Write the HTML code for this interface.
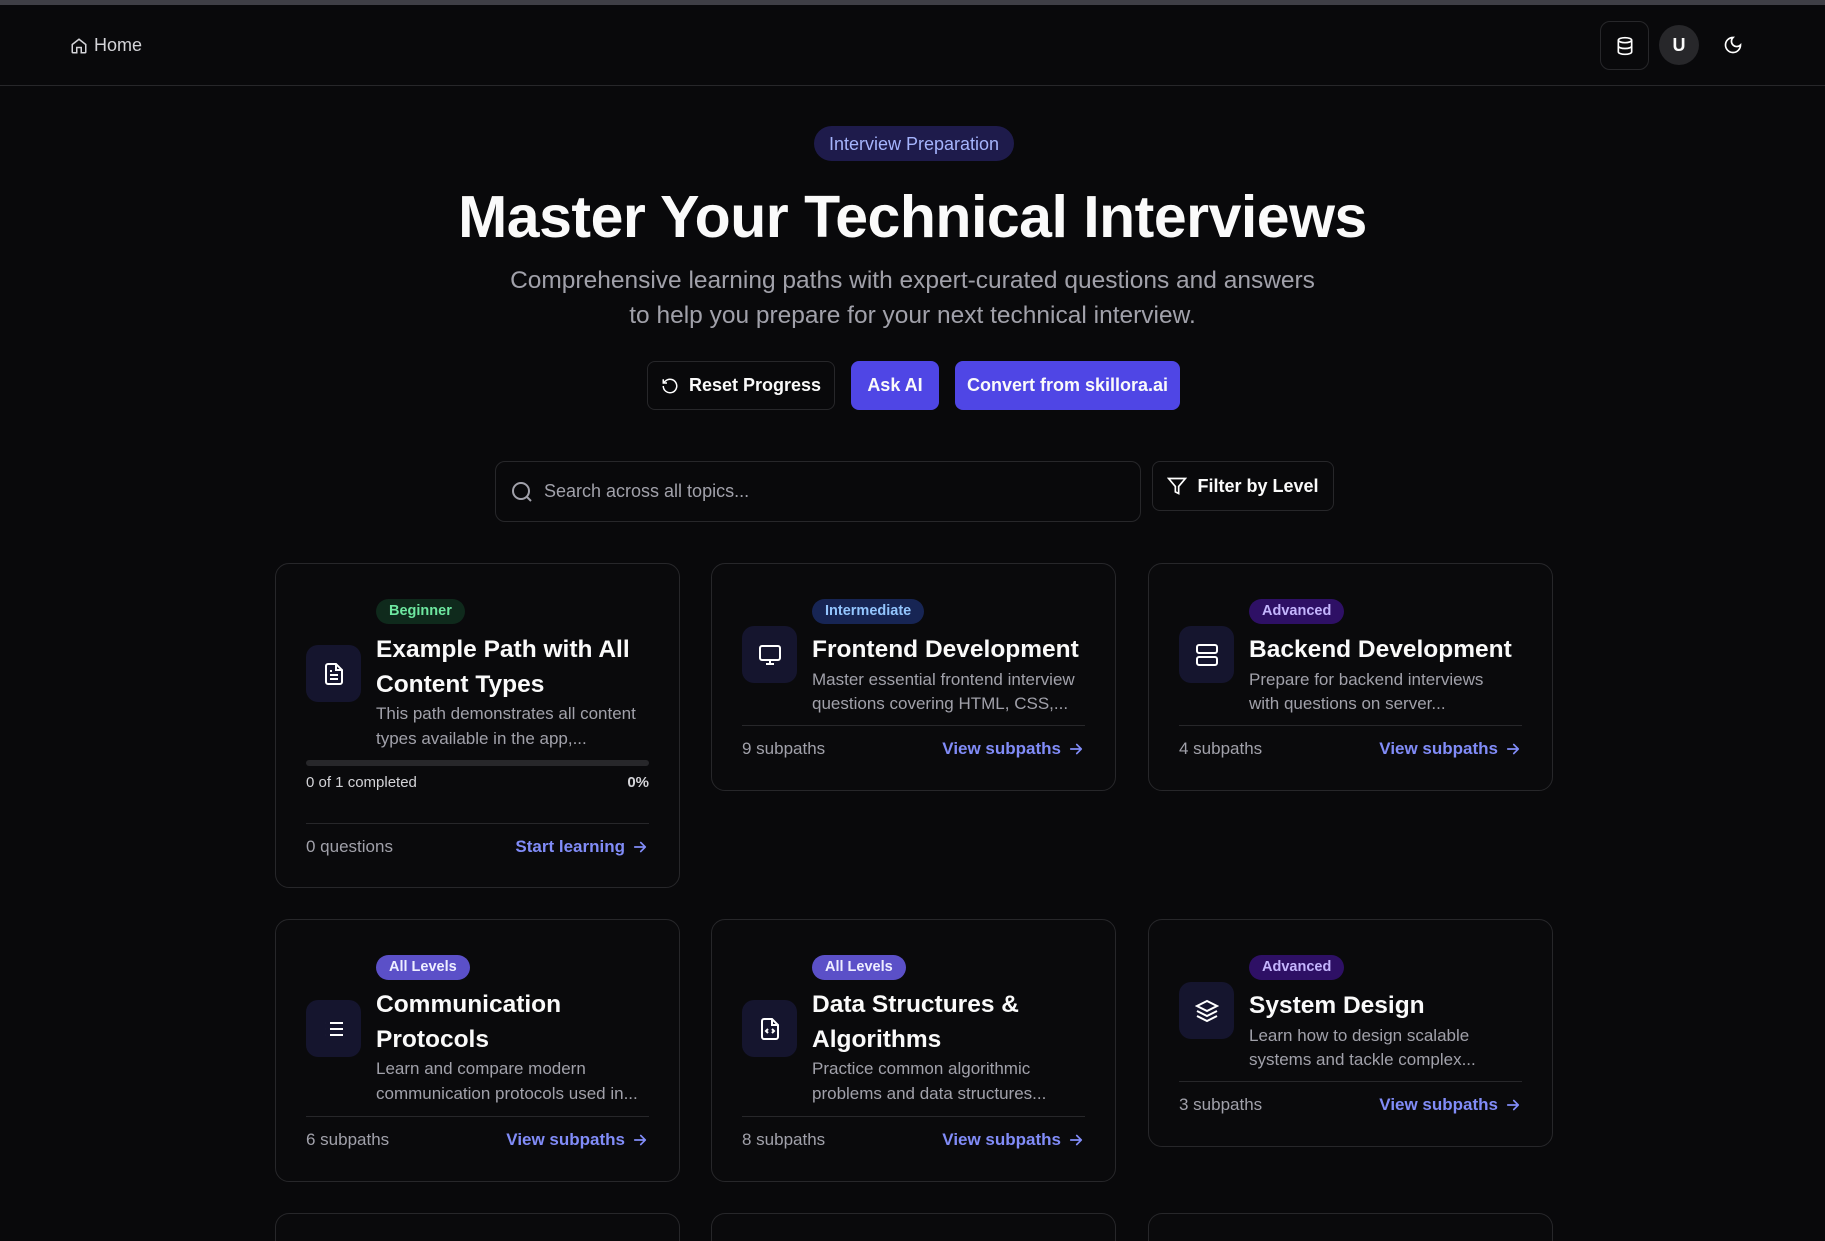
<!DOCTYPE html>
<html style="width:1825px;height:1241px;overflow:hidden"><head><meta charset="utf-8"><style>
*{box-sizing:border-box;margin:0;padding:0}
body{width:1825px;height:1241px;background:#09090b;font-family:"Liberation Sans",sans-serif;color:#fafafa;overflow:hidden;position:relative}
.abs{position:absolute}
.top{left:0;top:0;width:1825px;height:5px;background:#3f3f46}
.hdr{left:0;top:85px;width:1825px;height:1px;background:#27272a}
.card{position:absolute;width:405px;border:1px solid #27272a;border-radius:14px;background:#0a0a0c}
.card>*{position:absolute}
.ic{left:30px;width:55px;height:57px;border-radius:12px;background:#15152e;display:flex;align-items:center;justify-content:center}
.bd{left:100px;height:25px;line-height:25px;padding:0 13px;border-radius:13px;font-size:14.5px;font-weight:bold}
.tt{left:100px;font-size:24.5px;font-weight:bold;line-height:35px;white-space:nowrap;color:#fafafa}
.ds{left:100px;font-size:17px;line-height:25px;color:#a1a1aa;white-space:nowrap}
.dv{left:30px;right:30px;height:1px;background:#27272a}
.ft{left:30px;right:30px;font-size:17px;line-height:25px;color:#a1a1aa;display:flex;justify-content:space-between}
.ft b{color:#818cf8;font-weight:bold;display:flex;align-items:center;gap:6px}
.beg{background:#0f2a1c;color:#6ee7a0}.int{background:#172554;color:#93c5fd}.adv{background:#2e1065;color:#c4b5fd}.all{background:#5b50c8;color:#eef}
.btn{position:absolute;top:361px;height:49px;border-radius:8px;font-size:18px;font-weight:bold;display:flex;align-items:center;justify-content:center;gap:10px}
</style></head><body>
<svg width="0" height="0" style="position:absolute"><defs><symbol id="ar" viewBox="0 0 24 24"><path d="M5 12h14M13 6l6 6-6 6" fill="none" stroke="#818cf8" stroke-width="2.2" stroke-linecap="round" stroke-linejoin="round"/></symbol></defs></svg>
<div class="abs top"></div><div class="abs hdr"></div>
<div class="abs" style="left:70px;top:35px;font-size:18px;color:#d4d4d8;display:flex;align-items:center;gap:6px">
<svg width="18" height="18" viewBox="0 0 24 24" fill="none" stroke="#d4d4d8" stroke-width="2"><path d="M3 10l9-7 9 7v10a1 1 0 0 1-1 1h-5v-7h-6v7H4a1 1 0 0 1-1-1z"/></svg>Home</div>
<div class="abs" style="left:1600px;top:21px;width:49px;height:49px;border:1px solid #27272a;border-radius:10px;display:flex;align-items:center;justify-content:center">
<svg width="20" height="20" viewBox="0 0 24 24" fill="none" stroke="#fff" stroke-width="2"><ellipse cx="12" cy="5" rx="8" ry="3"/><path d="M4 5v14c0 1.7 3.6 3 8 3s8-1.3 8-3V5M4 12c0 1.7 3.6 3 8 3s8-1.3 8-3"/></svg></div>
<div class="abs" style="left:1659px;top:25px;width:40px;height:40px;border-radius:50%;background:#27272a;display:flex;align-items:center;justify-content:center;font-weight:bold;font-size:18px">U</div>
<svg class="abs" style="left:1723px;top:35px" width="20" height="20" viewBox="0 0 24 24" fill="none" stroke="#fff" stroke-width="2"><path d="M12 3a6 6 0 0 0 9 9 9 9 0 1 1-9-9z"/></svg>

<div class="abs" style="left:814px;top:126px;width:200px;height:35px;border-radius:18px;background:#1e1b4b;color:#a5b4fc;font-size:18px;line-height:37px;text-align:center">Interview Preparation</div>
<div class="abs" style="left:0;width:1825px;top:180px;text-align:center;font-size:59px;font-weight:bold;line-height:74px;letter-spacing:-0.5px">Master Your Technical Interviews</div>
<div class="abs" style="left:0;width:1825px;top:263px;text-align:center;font-size:24.5px;line-height:35px;color:#a1a1aa">Comprehensive learning paths with expert-curated questions and answers<br>to help you prepare for your next technical interview.</div>

<div class="btn" style="left:647px;width:188px;border:1px solid #27272a"><svg width="18" height="18" viewBox="0 0 24 24" fill="none" stroke="#fff" stroke-width="2"><path d="M3 12a9 9 0 1 0 3-6.7L3 8M3 3v5h5"/></svg>Reset Progress</div>
<div class="btn" style="left:851px;width:88px;background:#4f46e5">Ask AI</div>
<div class="btn" style="left:955px;width:225px;background:#4f46e5">Convert from skillora.ai</div>

<div class="abs" style="left:495px;top:461px;width:646px;height:61px;border:1px solid #27272a;border-radius:10px;display:flex;align-items:center;padding-left:14px;gap:10px;color:#a1a1aa;font-size:18px">
<svg width="24" height="24" viewBox="0 0 24 24" fill="none" stroke="#a1a1aa" stroke-width="2"><circle cx="11" cy="11" r="8"/><path d="M21 21l-4.3-4.3"/></svg>Search across all topics...</div>
<div class="abs" style="left:1152px;top:461px;width:182px;height:50px;border:1px solid #27272a;border-radius:8px;display:flex;align-items:center;justify-content:center;gap:10px;font-size:18px;font-weight:bold">
<svg width="20" height="20" viewBox="0 0 24 24" fill="none" stroke="#fff" stroke-width="2"><path d="M22 3H2l8 9.5V19l4 2v-8.5z"/></svg>Filter by Level</div>

<div class="card" style="left:275px;top:563px;height:325px">
<div class="ic" style="top:81px"><svg width="24" height="24" viewBox="0 0 24 24" fill="none" stroke="#fff" stroke-width="2"><path d="M14 2H6a2 2 0 0 0-2 2v16a2 2 0 0 0 2 2h12a2 2 0 0 0 2-2V8z"/><path d="M14 2v6h6M16 13H8M16 17H8M10 9H8"/></svg></div>
<div class="bd beg" style="top:35px">Beginner</div>
<div class="tt" style="top:68px">Example Path with All</div>
<div class="tt" style="top:103px">Content Types</div>
<div class="ds" style="top:137px">This path demonstrates all content</div>
<div class="ds" style="top:162px">types available in the app,...</div>
<div style="left:30px;right:30px;top:196px;height:6px;border-radius:3px;background:#27272a"></div>
<div style="left:30px;right:30px;top:208px;font-size:15px;color:#d4d4d8;display:flex;justify-content:space-between;line-height:22px"><span>0 of 1 completed</span><b>0%</b></div>
<div class="dv" style="top:259px"></div>
<div class="ft" style="top:270px"><span>0 questions</span><b>Start learning <svg width="18" height="18"><use href="#ar"/></svg></b></div>
</div>

<div class="card" style="left:711px;top:563px;height:228px">
<div class="ic" style="top:62px"><svg width="24" height="24" viewBox="0 0 24 24" fill="none" stroke="#fff" stroke-width="2"><rect x="2" y="3" width="20" height="14" rx="2"/><path d="M8 21h8M12 17v4"/></svg></div>
<div class="bd int" style="top:35px">Intermediate</div>
<div class="tt" style="top:68px">Frontend Development</div>
<div class="ds" style="top:103px">Master essential frontend interview</div>
<div class="ds" style="top:127px">questions covering HTML, CSS,...</div>
<div class="dv" style="top:161px"></div>
<div class="ft" style="top:172px"><span>9 subpaths</span><b>View subpaths <svg width="18" height="18"><use href="#ar"/></svg></b></div>
</div>

<div class="card" style="left:1148px;top:563px;height:228px">
<div class="ic" style="top:62px"><svg width="24" height="24" viewBox="0 0 24 24" fill="none" stroke="#fff" stroke-width="2"><rect x="2" y="2" width="20" height="8" rx="2"/><rect x="2" y="14" width="20" height="8" rx="2"/><path d="M6 6h.01M6 18h.01"/></svg></div>
<div class="bd adv" style="top:35px">Advanced</div>
<div class="tt" style="top:68px">Backend Development</div>
<div class="ds" style="top:103px">Prepare for backend interviews</div>
<div class="ds" style="top:127px">with questions on server...</div>
<div class="dv" style="top:161px"></div>
<div class="ft" style="top:172px"><span>4 subpaths</span><b>View subpaths <svg width="18" height="18"><use href="#ar"/></svg></b></div>
</div>

<div class="card" style="left:275px;top:919px;height:263px">
<div class="ic" style="top:80px"><svg width="24" height="24" viewBox="0 0 24 24" fill="none" stroke="#fff" stroke-width="2"><path d="M8 6h13M8 12h13M8 18h13M3 6h.01M3 12h.01M3 18h.01"/></svg></div>
<div class="bd all" style="top:35px">All Levels</div>
<div class="tt" style="top:67px">Communication</div>
<div class="tt" style="top:102px">Protocols</div>
<div class="ds" style="top:136px">Learn and compare modern</div>
<div class="ds" style="top:161px">communication protocols used in...</div>
<div class="dv" style="top:196px"></div>
<div class="ft" style="top:207px"><span>6 subpaths</span><b>View subpaths <svg width="18" height="18"><use href="#ar"/></svg></b></div>
</div>

<div class="card" style="left:711px;top:919px;height:263px">
<div class="ic" style="top:80px"><svg width="24" height="24" viewBox="0 0 24 24" fill="none" stroke="#fff" stroke-width="2"><path d="M14 2H6a2 2 0 0 0-2 2v16a2 2 0 0 0 2 2h12a2 2 0 0 0 2-2V8z"/><path d="M14 2v6h6M10 12l-2 2 2 2M14 12l2 2-2 2"/></svg></div>
<div class="bd all" style="top:35px">All Levels</div>
<div class="tt" style="top:67px">Data Structures &amp;</div>
<div class="tt" style="top:102px">Algorithms</div>
<div class="ds" style="top:136px">Practice common algorithmic</div>
<div class="ds" style="top:161px">problems and data structures...</div>
<div class="dv" style="top:196px"></div>
<div class="ft" style="top:207px"><span>8 subpaths</span><b>View subpaths <svg width="18" height="18"><use href="#ar"/></svg></b></div>
</div>

<div class="card" style="left:1148px;top:919px;height:228px">
<div class="ic" style="top:62px"><svg width="24" height="24" viewBox="0 0 24 24" fill="none" stroke="#fff" stroke-width="2"><path d="M12 2L2 7l10 5 10-5z"/><path d="M2 17l10 5 10-5M2 12l10 5 10-5"/></svg></div>
<div class="bd adv" style="top:35px">Advanced</div>
<div class="tt" style="top:68px">System Design</div>
<div class="ds" style="top:103px">Learn how to design scalable</div>
<div class="ds" style="top:127px">systems and tackle complex...</div>
<div class="dv" style="top:161px"></div>
<div class="ft" style="top:172px"><span>3 subpaths</span><b>View subpaths <svg width="18" height="18"><use href="#ar"/></svg></b></div>
</div>

<div class="card" style="left:275px;top:1213px;height:28px;border-bottom:none;border-radius:14px 14px 0 0"></div>
<div class="card" style="left:711px;top:1213px;height:28px;border-bottom:none;border-radius:14px 14px 0 0"></div>
<div class="card" style="left:1148px;top:1213px;height:28px;border-bottom:none;border-radius:14px 14px 0 0"></div>
</body></html>
